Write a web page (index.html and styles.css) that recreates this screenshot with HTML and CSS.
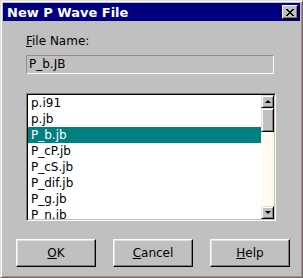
FILE: index.html
```html
<html>
  <head>
    <meta charset="UTF-8">
    <title>New P Wave File</title>
    <link rel="stylesheet" href="styles.css">
  </head>
  <body>
    <div class="dialog">
      <div class="title-bar">
        <span class="title">New P Wave File</span>
        <div class="close-btn">
          <svg width="8" height="7" viewBox="0 0 8 7">
            <path d="M0 0h2v1h1v1h2v-1h1v-1h2v1h-1v1h-1v1h-1v1h1v1h1v1h1v1h-2v-1h-1v-1h-2v1h-1v1h-2v-1h1v-1h1v-1h1v-1h-1v-1h-1v-1h-1z" fill="#000"/>
          </svg>
        </div>
      </div>

      <p class="field-label"><u>F</u>ile Name:</p>
      <div class="field">P_b.JB</div>

      <div class="list-box">
        <div class="list-items">
          <div class="list-item">p.i91</div>
          <div class="list-item">p.jb</div>
          <div class="list-item selected">P_b.jb</div>
          <div class="list-item">P_cP.jb</div>
          <div class="list-item">P_cS.jb</div>
          <div class="list-item">P_dif.jb</div>
          <div class="list-item">P_g.jb</div>
          <div class="list-item">P_n.jb</div>
        </div>
        <div class="scrollbar">
          <div class="scroll-btn"><span class="arrow-up"></span></div>
          <div class="scroll-thumb"></div>
          <div class="scroll-track"></div>
          <div class="scroll-btn"><span class="arrow-down"></span></div>
        </div>
      </div>

      <div class="buttons">
        <div class="btn"><u>O</u>K</div>
        <div class="btn"><u>C</u>ancel</div>
        <div class="btn"><u>H</u>elp</div>
      </div>
    </div>
  </body>
</html>
```

FILE: styles.css
```css
html, body {
  margin: 0;
  width: 303px;
  height: 278px;
  overflow: hidden;
  background-color: #c0c0c0;
  font-family: 'DejaVu Sans', sans-serif;
  font-size: 12px;
  color: #000;
}

.dialog {
  width: 303px;
  height: 278px;
  box-sizing: border-box;
  border: 1px solid;
  border-color: #dfdfdf #7a6868 #7a6868 #dfdfdf;
  box-shadow: inset 1px 1px #fffbf0, inset -1px -1px #a08c8c;
  padding: 2px;
}

.title-bar {
  height: 18px;
  background-color: #000080;
  display: flex;
  align-items: center;
  justify-content: space-between;
  padding: 0 2px 0 4px;
}

.title {
  color: #fff;
  font-weight: bold;
  font-size: 13px;
}

.close-btn {
  width: 16px;
  height: 14px;
  box-sizing: border-box;
  background-color: #c0c0c0;
  border: 1px solid;
  border-color: #fffbf0 #000 #000 #fffbf0;
  box-shadow: inset -1px -1px #8c7878;
  display: flex;
  align-items: center;
  justify-content: center;
}

.field-label {
  margin: 12px 0 0 23px;
  line-height: 16px;
}

.field {
  margin: 6px 0 0 23px;
  width: 248px;
  height: 19px;
  box-sizing: border-box;
  border: 1px solid;
  border-color: #a08888 #fffbf0 #fffbf0 #a08888;
  padding-left: 2px;
  line-height: 17px;
}

.list-box {
  margin: 19px 0 0 23px;
  width: 250px;
  height: 128px;
  box-sizing: border-box;
  border: 1px solid;
  border-color: #8c7878 #fffbf0 #fffbf0 #8c7878;
  box-shadow: inset 1px 1px #000, inset -1px -1px #c0c0c0;
  padding: 1px;
  display: flex;
  background-color: #fff;
}

.list-items {
  flex: 1;
  overflow: hidden;
}

.list-item {
  height: 16px;
  line-height: 16px;
  padding-left: 3px;
  white-space: nowrap;
}

.list-item.selected {
  background-color: #008080;
  color: #fff;
}

.scrollbar {
  width: 13px;
  display: flex;
  flex-direction: column;
}

.scroll-btn, .scroll-thumb {
  box-sizing: border-box;
  background-color: #c0c0c0;
  border: 1px solid;
  border-color: #dfdfdf #000 #000 #dfdfdf;
  box-shadow: inset 1px 1px #fffbf0, inset -1px -1px #8c7878;
}

.scroll-btn {
  height: 13px;
  display: flex;
  align-items: center;
  justify-content: center;
}

.scroll-thumb {
  height: 24px;
}

.scroll-track {
  flex: 1;
  background-color: #fffbf0;
}

.arrow-up, .arrow-down {
  width: 0;
  height: 0;
  border-left: 3px solid transparent;
  border-right: 3px solid transparent;
}

.arrow-up {
  border-bottom: 3px solid #000;
}

.arrow-down {
  border-top: 3px solid #000;
}

.buttons {
  display: flex;
  gap: 17px;
  margin: 18px 0 0 13px;
}

.btn {
  width: 80px;
  height: 28px;
  box-sizing: border-box;
  border: 1px solid;
  border-color: #fffbf0 #000 #000 #fffbf0;
  box-shadow: inset -1px -1px #8c7878, inset 1px 1px #dfdfdf;
  display: flex;
  align-items: center;
  justify-content: center;
}
```
